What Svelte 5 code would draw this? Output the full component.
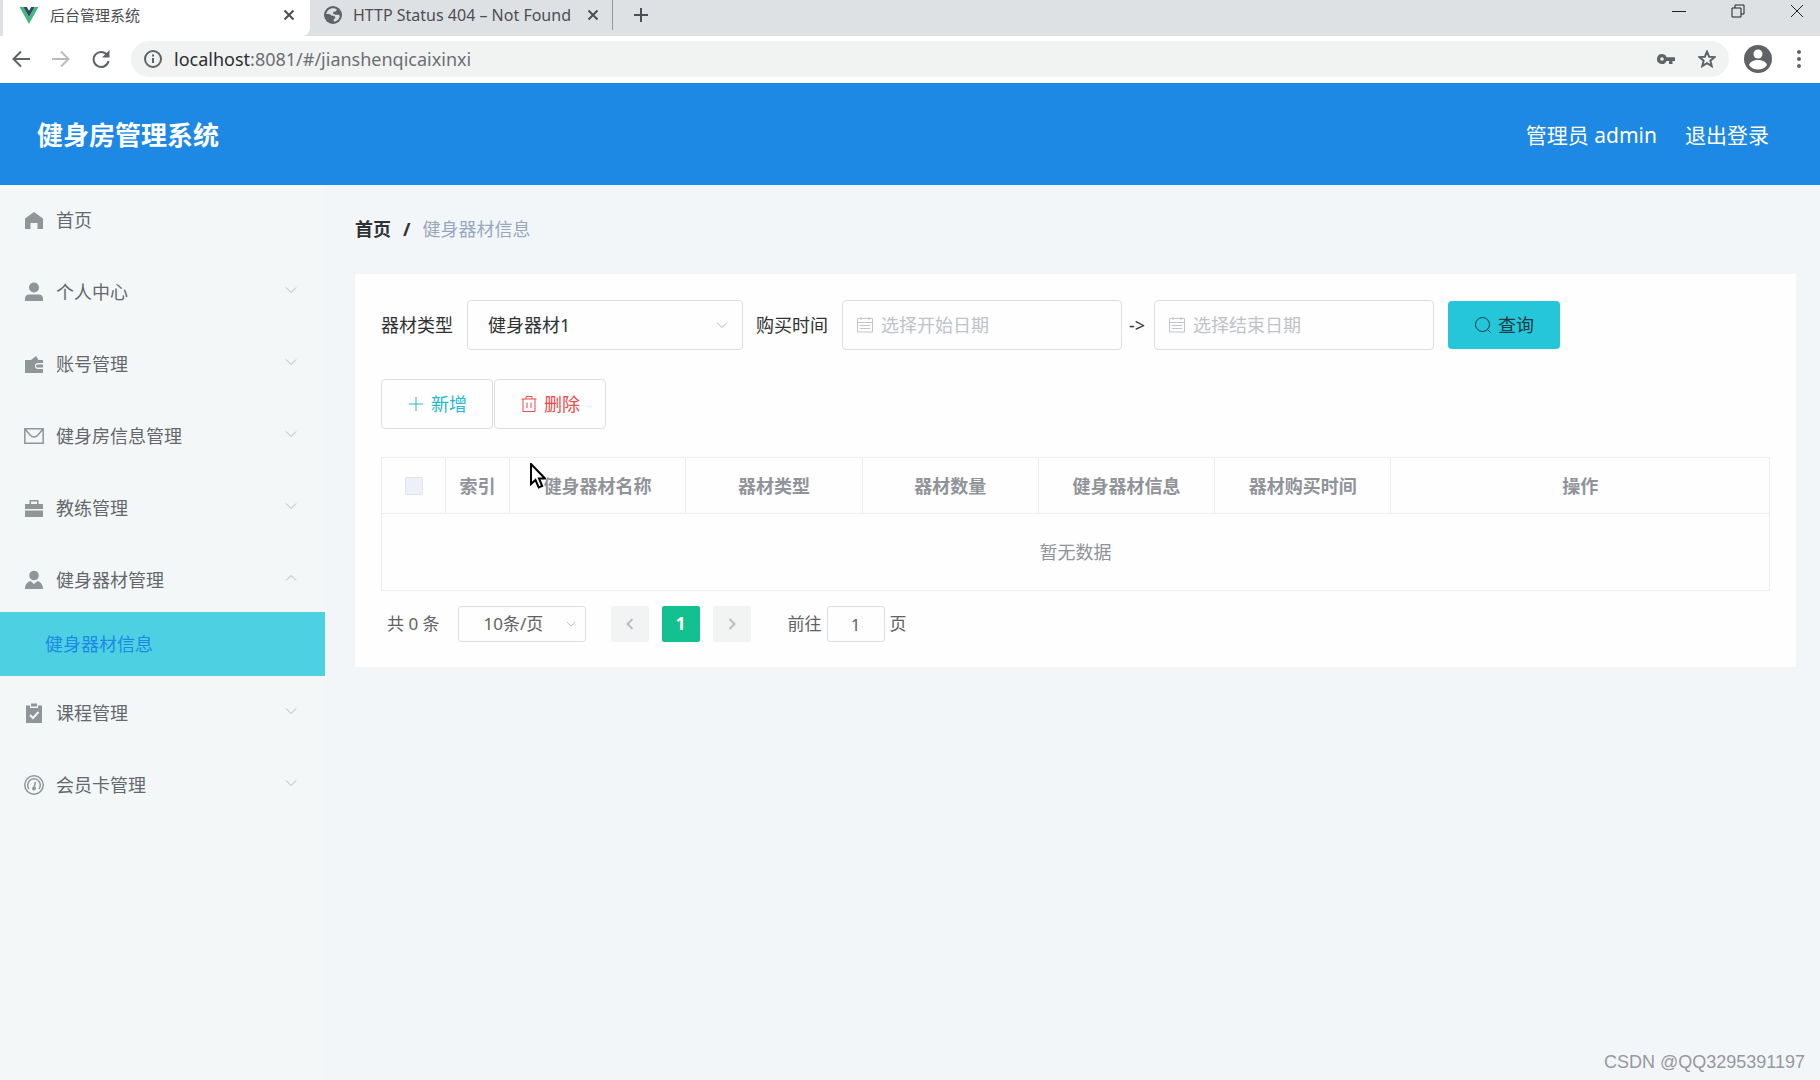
<script>
  const menu = [
    { label: '首页', icon: 'home' },
    { label: '个人中心', icon: 'user', children: [] },
    { label: '账号管理', icon: 'wallet', children: [] },
    { label: '健身房信息管理', icon: 'message', children: [] },
    { label: '教练管理', icon: 'case', children: [] },
    { label: '健身器材管理', icon: 'custom', children: ['健身器材信息'] },
    { label: '课程管理', icon: 'claim', children: [] },
    { label: '会员卡管理', icon: 'odometer', children: [] },
  ];

  const columns = ['健身器材名称', '器材类型', '器材数量', '健身器材信息', '器材购买时间'];

  let opened = $state('健身器材管理');
  let type = $state('健身器材1');
  let start = $state('');
  let end = $state('');
  let page = $state(1);
  let size = $state(10);
  let total = $state(0);

  function toggle(item) {
    if (!item.children) return;
    opened = opened === item.label ? '' : item.label;
  }
</script>

{#snippet calendar()}
  <svg class="calendar" viewBox="0 0 18 18" aria-hidden="true">
    <path d="M1.5 2.5h15v13.500h-15zM1.500 6.500h15M4 9.500h10M4 12.500h10M5 1v3M13 1v3" />
  </svg>
{/snippet}

{#snippet arrow(up)}
  <svg class="arrow" class:up viewBox="0 0 12 8" aria-hidden="true">
    <path d="M1 1.500l5 5 5-5" />
  </svg>
{/snippet}

<div class="page">
  <!-- Pestañas -->
  <div class="tabs">
    <div class="tab active">
      <svg class="favicon" viewBox="0 0 20 18" aria-hidden="true">
        <path fill="#41b883" d="M0 0h4l6 10.500L16 0h4L10 18z" />
        <path fill="#35495e" d="M4 0h3.700L10 4l2.300-4H16L10 10.500z" />
      </svg>
      <span class="tab-title">后台管理系统</span>
      <button class="close" aria-label="关闭标签页">
        <svg viewBox="0 0 12 12"><path d="M1.500 1.500l9 9M10.500 1.500l-9 9" /></svg>
      </button>
    </div>
    <div class="tab second">
      <svg class="globe" viewBox="0 0 18 18" aria-hidden="true">
        <circle cx="9" cy="9" r="9" fill="#5f6368" />
        <path fill="#dee1e3" d="M9 2.200c2 0 3 .6 4 1.600l-1.500 1.700-2 .3-.5 2 2.500 1h3l1.300 1c-.3 3-2.500 5.500-5.800 6l-.5-2.300 2-1.500-1-2-3-.5L5.500 8H2.200C2.800 4.800 5.500 2.200 9 2.200z" />
      </svg>
      <span class="tab-title">HTTP Status 404 – Not Found</span>
      <button class="close" aria-label="关闭标签页">
        <svg viewBox="0 0 12 12"><path d="M1.500 1.500l9 9M10.500 1.500l-9 9" /></svg>
      </button>
    </div>
    <button class="new-tab" aria-label="新标签页">
      <svg viewBox="0 0 16 16"><path d="M8 1v14M1 8h14" /></svg>
    </button>
    <div class="window">
      <button aria-label="最小化"><svg viewBox="0 0 14 14"><path d="M0 7.500h14" /></svg></button>
      <button aria-label="还原"><svg viewBox="0 0 14 14"><path d="M1 4h9v9H1zM4 4V1h9v9h-3" /></svg></button>
      <button aria-label="关闭"><svg viewBox="0 0 14 14"><path d="M1 1l12 12M13 1L1 13" /></svg></button>
    </div>
  </div>

  <!-- Barra de direcciones -->
  <div class="toolbar">
    <button aria-label="后退"><svg viewBox="0 0 20 20"><path d="M19 10H3M10 2.500L2.500 10l7.500 7.500" /></svg></button>
    <button class="muted" aria-label="前进"><svg viewBox="0 0 20 20"><path d="M1 10h16M10 2.500l7.500 7.500-7.500 7.500" /></svg></button>
    <button aria-label="重新加载">
      <svg viewBox="0 0 20 20"><path d="M16.500 6.500A7.500 7.500 0 1 0 17.500 12" /><path class="solid" d="M18.500 1v7.500H11z" /></svg>
    </button>
    <div class="omnibox">
      <svg class="info" viewBox="0 0 18 18" aria-hidden="true"><circle cx="9" cy="9" r="8" /><path d="M9 8v5M9 4.500v2" /></svg>
      <span class="url"><b>localhost</b>:8081/#/jianshenqicaixinxi</span>
      <svg class="key" viewBox="0 0 18 12" aria-hidden="true">
        <path d="M5 1a5 5 0 1 0 4.600 7H12v3h3.500V8H18V4.200H9.600A5 5 0 0 0 5 1zm0 3.200a1.800 1.800 0 1 1 0 3.600 1.800 1.800 0 0 1 0-3.600z" />
      </svg>
      <svg class="star" viewBox="0 0 18 18" aria-hidden="true"><path d="M9 1.500l2.100 5.200 5.500.4-4.200 3.600 1.300 5.400L9 13.200l-4.700 2.900 1.300-5.400L1.400 7.100l5.500-.4z" /></svg>
    </div>
    <svg class="avatar" viewBox="0 0 28 28" aria-hidden="true">
      <circle cx="14" cy="14" r="14" fill="#5f6368" />
      <circle cx="14" cy="9" r="4.500" fill="#fff" />
      <path fill="#fff" d="M5 20c1-3.500 5-5 9-5s8 1.500 9 5c-2 3-5.500 4.500-9 4.500S7 23 5 20z" />
    </svg>
    <svg class="dots" viewBox="0 0 4 18" aria-hidden="true"><circle cx="2" cy="2" r="2" /><circle cx="2" cy="9" r="2" /><circle cx="2" cy="16" r="2" /></svg>
  </div>

  <header>
    <h1>健身房管理系统</h1>
    <span>管理员 admin</span>
    <a href="#/login">退出登录</a>
  </header>

  <div class="body">
    <!-- Menú lateral -->
    <nav>
      <ul>
        {#each menu as item}
          <li class:open={opened === item.label}>
            <button class="menu-item" onclick={() => toggle(item)}>
              <svg class="menu-icon" viewBox="0 0 20 20" aria-hidden="true">
                {#if item.icon === 'home'}
                  <path d="M10 2l9 6.500V19h-5.500v-6h-7v6H1V8.500z" />
                {:else if item.icon === 'user'}
                  <circle cx="10" cy="5.500" r="5" />
                  <path d="M1 19v-2.500c0-2.500 2-4 4-4h10c2 0 4 1.500 4 4V19z" />
                {:else if item.icon === 'wallet'}
                  <path d="M1 6h6l5-4 2.500 4H19v3h-5a3 3 0 0 0 0 6h5v4H1z" />
                  <path d="M13.500 10.500H19v3h-5.500a1.500 1.500 0 0 1 0-3z" />
                {:else if item.icon === 'message'}
                  <path class="line" d="M.8 2.800h18.400v14.400H.8zM1 3l5 6c2.500 2.500 5.500 2.500 8 0l5-6" />
                {:else if item.icon === 'case'}
                  <path d="M1 6h4.500V2h9v4H19v5H1zM7 3.500V6h6V3.500zM1 12.500h18V19H1z" fill-rule="evenodd" />
                {:else if item.icon === 'custom'}
                  <circle cx="10" cy="5.500" r="4.800" />
                  <path d="M6.500 11l3.500 3 3.500-3c3.500 1 5.500 4 5.500 8H1c0-4 2-7 5.500-8z" />
                {:else if item.icon === 'claim'}
                  <path d="M2 2.500h4V5h8V2.500h4V20H2z" />
                  <path d="M7 .5h6v3H7z" />
                  <path class="check" d="M6 12l3 3 5.500-6" />
                {:else}
                  <circle class="line" cx="10" cy="10" r="9.200" />
                  <path class="line" d="M5 14a6.300 6.300 0 1 1 10 0M10 13l1.500-6" />
                  <circle cx="10" cy="13.500" r="2" />
                {/if}
              </svg>
              <span>{item.label}</span>
              {#if item.children}
                {@render arrow(opened === item.label)}
              {/if}
            </button>
            {#if item.children && opened === item.label}
              {#each item.children as child}
                <a class="submenu" href="#/jianshenqicaixinxi">{child}</a>
              {/each}
            {/if}
          </li>
        {/each}
      </ul>
    </nav>

    <main>
      <div class="breadcrumb">
        <a href="#/">首页</a>
        <b>/</b>
        <span>健身器材信息</span>
      </div>

      <section class="card">
        <!-- Filtros -->
        <form class="filters" onsubmit={(e) => e.preventDefault()}>
          <label for="type">器材类型</label>
          <div class="select">
            <select id="type" bind:value={type}>
              <option>健身器材1</option>
            </select>
            {@render arrow(false)}
          </div>
          <label for="start">购买时间</label>
          <div class="date">
            {@render calendar()}
            <input id="start" placeholder="选择开始日期" bind:value={start} />
          </div>
          <label class="to" for="end">-&gt;</label>
          <div class="date">
            {@render calendar()}
            <input id="end" placeholder="选择结束日期" bind:value={end} />
          </div>
          <button class="search">
            <svg viewBox="0 0 18 18" aria-hidden="true"><circle cx="8.500" cy="8.500" r="7" /><path d="M13.500 13.500l3 3" /></svg>
            查询
          </button>
        </form>

        <div class="actions">
          <button class="add">
            <svg viewBox="0 0 18 18" aria-hidden="true"><path d="M9 2v14M2 9h14" /></svg>
            新增
          </button>
          <button class="delete">
            <svg viewBox="0 0 18 18" aria-hidden="true"><path d="M1.500 4h15M6 4V1.500h6V4M3 4v12.500h12V4M7 7.500v5.500M11 7.500v5.500" /></svg>
            删除
          </button>
        </div>

        <table>
          <thead>
            <tr>
              <th class="narrow"><input type="checkbox" aria-label="全选" disabled /></th>
              <th class="narrow">索引</th>
              {#each columns as column}
                <th class="data">{column}</th>
              {/each}
              <th>操作</th>
            </tr>
          </thead>
          <tbody>
            <tr><td colspan="8">暂无数据</td></tr>
          </tbody>
        </table>

        <!-- Paginación -->
        <div class="pagination">
          <span class="total">共 {total} 条</span>
          <div class="select size">
            <select aria-label="每页条数" bind:value={size}>
              <option value={10}>10条/页</option>
              <option value={20}>20条/页</option>
            </select>
            {@render arrow(false)}
          </div>
          <button class="pager" aria-label="上一页" disabled>
            <svg viewBox="0 0 8 12"><path d="M6.500 1L1.500 6l5 5" /></svg>
          </button>
          <button class="pager current">1</button>
          <button class="pager" aria-label="下一页" disabled>
            <svg viewBox="0 0 8 12"><path d="M1.500 1l5 5-5 5" /></svg>
          </button>
          <label class="jump">前往 <input bind:value={page} /> 页</label>
        </div>
      </section>
    </main>
  </div>

  <svg class="cursor" viewBox="0 0 16 26" aria-hidden="true">
    <path d="M1 1v20l4.500-4 3.200 7.500 3.500-1.500L9 15.500h6z" />
  </svg>
  <div class="watermark">CSDN @QQ3295391197</div>
</div>

<style>
  :global(body) { background: #f3f6f9; }

  .page {
    position: relative;
    display: flex;
    flex-direction: column;
    min-height: 100vh;
    font-family: "Noto Sans", "Noto Sans CJK SC", sans-serif;
    font-size: 18px;
    line-height: 24px;
    color: #303133;
  }

  .page * { box-sizing: border-box; }

  svg {
    display: block;
    flex: none;
    fill: none;
    stroke: currentColor;
  }

  button, input, select {
    margin: 0;
    padding: 0;
    border: 0;
    background: none;
    font: inherit;
    color: inherit;
    outline: none;
  }

  button { cursor: pointer; }
  a { text-decoration: none; color: inherit; }

  /* navegador */
  .tabs {
    display: flex;
    height: 36px;
    padding-left: 3px;
    background: #dee1e3;
    font-size: 15px;
    color: #4b4e52;
  }

  .tab {
    display: flex;
    align-items: center;
    height: 30px;
  }

  .tab.active {
    width: 307px;
    height: 36px;
    padding: 0 15px 6px 16px;
    border-radius: 0 0 8px 0;
    background: #fff;
  }

  .tab.second {
    width: 303px;
    padding: 0 13px 0 14px;
    border-right: 1px solid #95989c;
    font-size: 16px;
  }

  .favicon { width: 20px; height: 17px; stroke: none; }
  .globe { width: 18px; height: 18px; stroke: none; }
  .tab-title { flex: 1; margin-left: 11px; white-space: nowrap; }
  .close svg { width: 12px; height: 12px; stroke-width: 2; }
  .new-tab { height: 30px; padding: 0 20px; }
  .new-tab svg { width: 16px; height: 16px; stroke-width: 2; }

  .window {
    display: flex;
    gap: 45px;
    height: 22px;
    margin-left: auto;
    padding-right: 16px;
    color: #222;
  }

  .window svg { width: 14px; height: 14px; }

  .toolbar {
    display: flex;
    align-items: center;
    height: 47px;
    padding: 0 19px 1px 11px;
    background: #fff;
    color: #5f6368;
  }

  .toolbar button { margin-right: 20px; }
  .toolbar button svg { width: 20px; height: 20px; stroke-width: 2; }
  .toolbar .muted { color: #b9bbbe; }
  .toolbar .solid { fill: currentColor; stroke: none; }

  .omnibox {
    flex: 1;
    display: flex;
    align-items: center;
    height: 36px;
    margin-right: 15px;
    padding: 0 13px;
    border-radius: 18px;
    background: #f1f3f3;
  }

  .info { width: 18px; height: 18px; stroke-width: 2; }
  .url { flex: 1; margin-left: 12px; color: #6b6f73; }
  .url b { font-weight: 400; color: #2b2d30; }
  .key { width: 18px; height: 12px; margin-right: 23px; fill: currentColor; stroke: none; }
  .star { width: 18px; height: 18px; stroke-width: 2; }
  .avatar { width: 28px; height: 28px; margin-right: 25px; stroke: none; }
  .dots { width: 4px; height: 18px; fill: currentColor; stroke: none; }

  header {
    display: flex;
    align-items: center;
    gap: 28px;
    height: 102px;
    padding: 2px 51px 0 37px;
    background: #1e88e5;
    color: #fff;
    font-size: 21px;
  }

  h1 { flex: 1; margin: 0; font-size: 26px; font-weight: 700; }

  .body { flex: 1; display: flex; }

  /* menú */
  nav {
    width: 325px;
    flex: none;
    padding-top: 2px;
    background: #f3f7f8;
    color: #64686d;
  }

  ul { margin: 0; padding: 0; list-style: none; }
  li { margin-bottom: 7px; }
  li.open { margin-bottom: 4px; }

  .menu-item {
    display: flex;
    align-items: center;
    width: 100%;
    height: 65px;
    padding: 0 28px 0 24px;
    text-align: left;
  }

  .menu-item span { flex: 1; margin-left: 12px; }
  .menu-icon { width: 20px; height: 20px; color: #909599; fill: currentColor; stroke: none; }
  .menu-icon .line { fill: none; stroke: currentColor; stroke-width: 1.5; }
  .menu-icon .check { fill: none; stroke: #f3f7f8; stroke-width: 2; }
  .arrow { width: 12px; height: 8px; color: #b4b8bd; }
  .menu-item .arrow { margin-bottom: 4px; }
  .arrow.up { transform: scaleY(-1); }

  .submenu {
    display: flex;
    align-items: center;
    height: 64px;
    padding-left: 45px;
    background: #4dd0e1;
    color: #1e88e5;
  }

  main { flex: 1; min-width: 0; padding: 32px 24px 24px 30px; }

  .breadcrumb {
    display: flex;
    gap: 12px;
    margin-bottom: 33px;
    color: #97a8be;
  }

  .breadcrumb a, .breadcrumb b { font-weight: 700; color: #303133; }

  .card { padding: 26px 26px 25px; background: #fdfefd; }

  .filters { display: flex; align-items: center; }
  .filters label { margin-right: 14px; }
  .filters .to { width: 18px; margin: 0 7px; }

  .select { position: relative; }

  .select .arrow {
    position: absolute;
    top: calc(50% - 4px);
    right: 15px;
    pointer-events: none;
  }

  select {
    width: 276px;
    height: 50px;
    padding-left: 20px;
    border: 1px solid #dcdfe1;
    border-radius: 4px;
    appearance: none;
  }

  .filters .select { margin-right: 13px; }

  .date {
    display: flex;
    align-items: center;
    width: 280px;
    height: 50px;
    padding: 0 13px;
    border: 1px solid #dcdfe1;
    border-radius: 4px;
  }

  .date input { flex: 1; min-width: 0; margin-left: 7px; }
  .date input::placeholder { color: #bfc3c9; opacity: 1; }
  .calendar { width: 18px; height: 18px; color: #c2c6cb; }

  .search, .actions button {
    display: flex;
    align-items: center;
    justify-content: center;
    gap: 6px;
    width: 112px;
    height: 50px;
    border-radius: 4px;
  }

  .search { height: 48px; margin-left: 14px; background: #26c6da; color: #213a42; }
  .search svg, .actions svg { width: 18px; height: 18px; }

  .actions { display: flex; gap: 1px; margin: 29px 0 28px; }
  .actions button { border: 1px solid #dcdfe1; }
  .actions .add { color: #26b8cc; }
  .actions .delete { color: #ea4a4a; }

  table {
    width: 100%;
    table-layout: fixed;
    border-collapse: collapse;
    color: #909399;
  }

  th, td { padding: 0; border: 1px solid #ebeeef; text-align: center; }
  th { height: 56px; font-weight: 700; }
  td { height: 77px; font-weight: 400; }
  .narrow { width: 64px; }
  .data { width: 12.7%; }

  th input {
    display: block;
    width: 18px;
    height: 18px;
    margin: 0 auto;
    border: 1px solid #e0e4ec;
    border-radius: 2px;
    background: #edf0f8;
    appearance: none;
  }

  .pagination {
    display: flex;
    align-items: center;
    padding: 15px 0 0 6px;
    color: #606266;
    font-size: 17px;
  }

  .size { margin: 0 25px 0 18px; }
  .size select { display: block; width: 128px; height: 36px; padding-left: 25px; border-radius: 3px; }
  .size .arrow { right: 10px; width: 10px; }

  .pager {
    display: flex;
    align-items: center;
    justify-content: center;
    width: 38px;
    height: 36px;
    margin-right: 13px;
    border-radius: 2px;
    background: #f2f4f4;
    color: #b9bdc3;
  }

  .pager svg { width: 8px; height: 12px; stroke-width: 2; }
  .pager.current { background: #13c08f; color: #fff; font-weight: 700; }

  .jump { display: flex; align-items: center; gap: 5px; margin-left: 24px; }

  .jump input {
    width: 58px;
    height: 36px;
    border: 1px solid #dcdfe1;
    border-radius: 3px;
    text-align: center;
  }

  .cursor {
    position: absolute;
    top: 463px;
    left: 530px;
    width: 16px;
    height: 26px;
    fill: #fff;
    stroke: #000;
    stroke-width: 2;
    pointer-events: none;
  }

  .watermark {
    position: absolute;
    right: 15px;
    bottom: 6px;
    font-family: "Liberation Sans", sans-serif;
    color: #96999c;
  }
</style>
